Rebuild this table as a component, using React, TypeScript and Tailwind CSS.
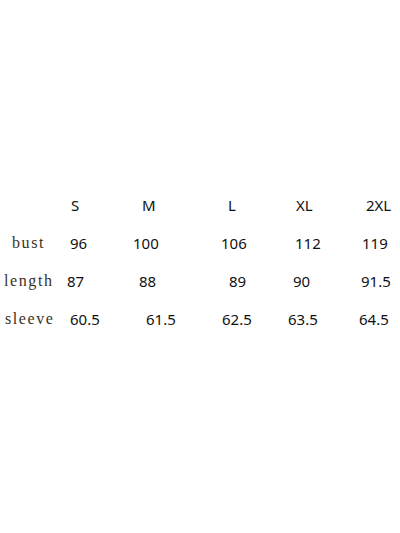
export default function App() {
  const num = "text-[15px] text-[#111] whitespace-nowrap";
  const label = "text-[16px] tracking-[1.6px] text-[#3b3024] whitespace-nowrap font-['Liberation_Serif',serif]";

  return (
    <div className="w-[400px] h-[533px] bg-white pt-[186px] font-['Noto_Sans',sans-serif]">
      <div className="flex items-center h-[38px] pl-[71px]">
        <span className={`${num} w-[71px]`}>S</span>
        <span className={`${num} w-[86px]`}>M</span>
        <span className={`${num} w-[68px]`}>L</span>
        <span className={`${num} w-[70px]`}>XL</span>
        <span className={num}>2XL</span>
      </div>

      <div className="flex items-center h-[38px] pl-[12px]">
        <span className={`${label} w-[58px]`}>bust</span>
        <span className={`${num} w-[63px]`}>96</span>
        <span className={`${num} w-[88px]`}>100</span>
        <span className={`${num} w-[74px]`}>106</span>
        <span className={`${num} w-[67px]`}>112</span>
        <span className={num}>119</span>
      </div>

      <div className="flex items-center h-[38px] pl-[4px]">
        <span className={`${label} w-[63px]`}>length</span>
        <span className={`${num} w-[72px]`}>87</span>
        <span className={`${num} w-[90px]`}>88</span>
        <span className={`${num} w-[64px]`}>89</span>
        <span className={`${num} w-[68px]`}>90</span>
        <span className={num}>91.5</span>
      </div>

      <div className="flex items-center h-[38px] pl-[5px]">
        <span className={`${label} w-[65px]`}>sleeve</span>
        <span className={`${num} w-[76px]`}>60.5</span>
        <span className={`${num} w-[76px]`}>61.5</span>
        <span className={`${num} w-[66px]`}>62.5</span>
        <span className={`${num} w-[71px]`}>63.5</span>
        <span className={num}>64.5</span>
      </div>
    </div>
  );
}
